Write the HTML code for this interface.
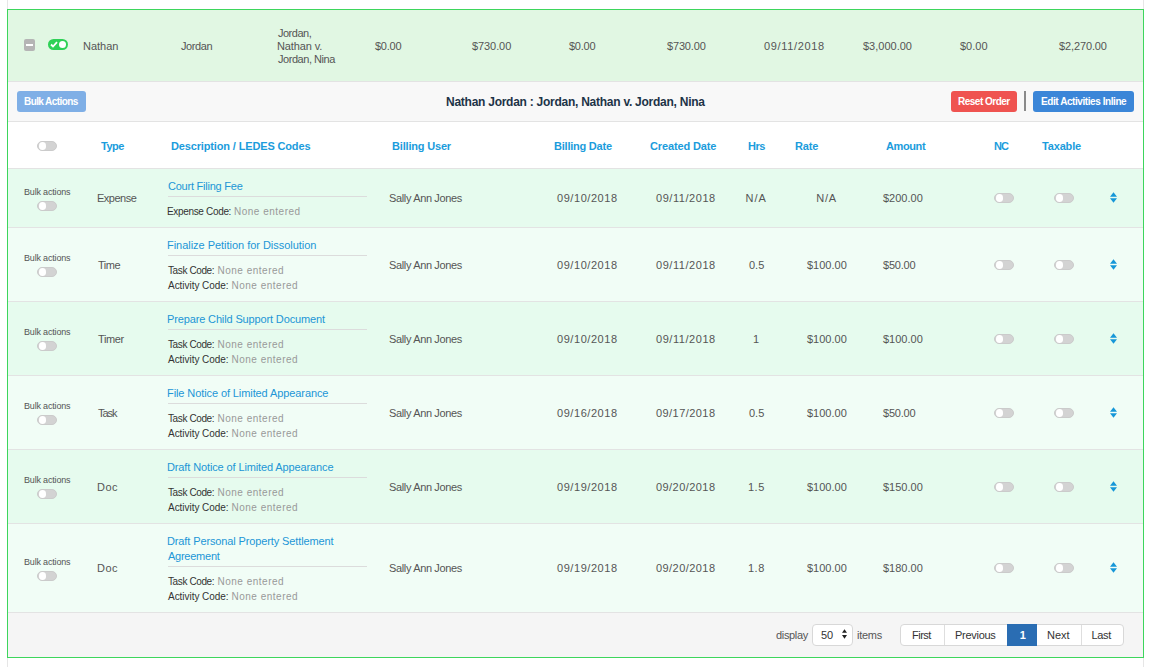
<!DOCTYPE html>
<html><head><meta charset="utf-8"><style>
html,body{margin:0;padding:0;background:#fff;width:1151px;height:667px;overflow:hidden;position:relative;font-family:"Liberation Sans",sans-serif;}
.t{position:absolute;white-space:nowrap;}
.row{position:absolute;left:8px;width:1135px;}
.hline{position:absolute;left:8px;width:1135px;height:1px;background:#e3e3e3;}
.dline{position:absolute;left:168px;width:199px;height:1px;background:#dcdcdc;}
.tog{position:absolute;width:18px;height:8px;border:1px solid #cbcbcb;border-radius:5px;background:#d3d3d3;}
.tog:after{content:"";position:absolute;left:0.5px;top:0;width:7.5px;height:8px;border-radius:50%;background:#fff;}
.sort{position:absolute;}
.vg{position:absolute;width:1px;background:#e6e6e6;}
</style></head><body>
<div class="vg" style="left:7px;top:0;height:9px"></div>
<div class="vg" style="left:1143px;top:0;height:9px"></div>
<div class="vg" style="left:7px;top:658px;height:9px"></div>
<div class="vg" style="left:1143px;top:658px;height:9px"></div>
<div style="position:absolute;left:7px;top:9px;width:1135px;height:647px;border:1px solid #3dd65c;background:#fff"></div>
<div class="row" style="top:10px;height:71px;background:#e1f7e3"></div>
<div class="hline" style="top:81px"></div>
<div class="row" style="top:82px;height:39px;background:#f8f8f8"></div>
<div class="hline" style="top:121px"></div>
<div class="row" style="top:122px;height:46px;background:#ffffff"></div>
<div class="hline" style="top:168px"></div>
<div class="row" style="top:613px;height:44px;background:#f5f5f5"></div>
<!-- header icons -->
<div style="position:absolute;left:24px;top:39px;width:11px;height:12px;border-radius:2px;background:#b5b5b5"></div>
<div style="position:absolute;left:26px;top:44px;width:7px;height:2px;background:#fff"></div>
<div style="position:absolute;left:48px;top:39px;width:20px;height:11px;border-radius:6px;background:#2fd157"></div>
<div style="position:absolute;left:59px;top:41px;width:7px;height:7px;border-radius:50%;background:#fff"></div>
<svg style="position:absolute;left:50px;top:41px" width="8" height="7" viewBox="0 0 8 7"><path d="M1 3.5L3 5.5L7 1.2" stroke="#fff" stroke-width="1.8" fill="none"/></svg>
<!-- buttons -->
<div style="position:absolute;left:17px;top:91px;width:69px;height:21px;border-radius:3px;background:#7fafe6"></div>
<div style="position:absolute;left:951px;top:91px;width:66px;height:21px;border-radius:3px;background:#ef5350"></div>
<div style="position:absolute;left:1024px;top:91px;width:2px;height:20px;background:#8a8a8a"></div>
<div style="position:absolute;left:1033px;top:91px;width:101px;height:21px;border-radius:3px;background:#3b86d8"></div>
<!-- header toggle -->
<div class="tog" style="left:37px;top:141px"></div>
<!-- footer controls -->
<div style="position:absolute;left:812px;top:624px;width:39px;height:20px;border:1px solid #d8d8d8;border-radius:4px;background:#fff"></div>
<svg style="position:absolute;left:842px;top:629px" width="5" height="10" viewBox="0 0 5 10"><path d="M2.5 0.2L5 3.8H0Z M0 6H5L2.5 9.7Z" fill="#222"/></svg>
<div style="position:absolute;left:900px;top:624px;width:222px;height:20px;border:1px solid #d8d8d8;border-radius:4px;background:#fff"></div>
<div style="position:absolute;left:944px;top:625px;width:1px;height:20px;background:#dedede"></div>
<div style="position:absolute;left:1007px;top:624px;width:30px;height:22px;background:#2a6db3"></div>
<div style="position:absolute;left:1081px;top:625px;width:1px;height:20px;background:#dedede"></div>

<div class="row" style="top:169px;height:58px;background:#e6fbee"></div>
<div class="hline" style="top:227px"></div>
<div class="tog" style="left:37px;top:201px"></div>
<div class="dline" style="top:196px"></div>
<div class="tog" style="left:994px;top:193px"></div>
<div class="tog" style="left:1054px;top:193px"></div>
<svg class="sort" style="left:1110px;top:192px" width="7" height="11" viewBox="0 0 7 11"><path d="M3.5 0.2L7 4.8H0Z M0 6.2H7L3.5 10.8Z" fill="#1697d8"/></svg>
<div class="row" style="top:228px;height:73px;background:#f1fdf6"></div>
<div class="hline" style="top:301px"></div>
<div class="tog" style="left:37px;top:267px"></div>
<div class="dline" style="top:255px"></div>
<div class="tog" style="left:994px;top:260px"></div>
<div class="tog" style="left:1054px;top:260px"></div>
<svg class="sort" style="left:1110px;top:259px" width="7" height="11" viewBox="0 0 7 11"><path d="M3.5 0.2L7 4.8H0Z M0 6.2H7L3.5 10.8Z" fill="#1697d8"/></svg>
<div class="row" style="top:302px;height:73px;background:#e6fbee"></div>
<div class="hline" style="top:375px"></div>
<div class="tog" style="left:37px;top:341px"></div>
<div class="dline" style="top:329px"></div>
<div class="tog" style="left:994px;top:334px"></div>
<div class="tog" style="left:1054px;top:334px"></div>
<svg class="sort" style="left:1110px;top:333px" width="7" height="11" viewBox="0 0 7 11"><path d="M3.5 0.2L7 4.8H0Z M0 6.2H7L3.5 10.8Z" fill="#1697d8"/></svg>
<div class="row" style="top:376px;height:73px;background:#f1fdf6"></div>
<div class="hline" style="top:449px"></div>
<div class="tog" style="left:37px;top:415px"></div>
<div class="dline" style="top:403px"></div>
<div class="tog" style="left:994px;top:408px"></div>
<div class="tog" style="left:1054px;top:408px"></div>
<svg class="sort" style="left:1110px;top:407px" width="7" height="11" viewBox="0 0 7 11"><path d="M3.5 0.2L7 4.8H0Z M0 6.2H7L3.5 10.8Z" fill="#1697d8"/></svg>
<div class="row" style="top:450px;height:73px;background:#e6fbee"></div>
<div class="hline" style="top:523px"></div>
<div class="tog" style="left:37px;top:489px"></div>
<div class="dline" style="top:477px"></div>
<div class="tog" style="left:994px;top:482px"></div>
<div class="tog" style="left:1054px;top:482px"></div>
<svg class="sort" style="left:1110px;top:481px" width="7" height="11" viewBox="0 0 7 11"><path d="M3.5 0.2L7 4.8H0Z M0 6.2H7L3.5 10.8Z" fill="#1697d8"/></svg>
<div class="row" style="top:524px;height:88px;background:#f1fdf6"></div>
<div class="hline" style="top:612px"></div>
<div class="tog" style="left:37px;top:571px"></div>
<div class="dline" style="top:566px"></div>
<div class="tog" style="left:994px;top:563px"></div>
<div class="tog" style="left:1054px;top:563px"></div>
<svg class="sort" style="left:1110px;top:562px" width="7" height="11" viewBox="0 0 7 11"><path d="M3.5 0.2L7 4.8H0Z M0 6.2H7L3.5 10.8Z" fill="#1697d8"/></svg>
<div class="t" id="t0" style="top:39.19px;font-size:11px;line-height:14px;color:#555555;left:83.00px;">Nathan</div>
<div class="t" id="t1" style="top:39.19px;font-size:11px;line-height:14px;color:#555555;letter-spacing:-0.400px;left:181.00px;">Jordan</div>
<div class="t" id="t2" style="top:26.19px;font-size:11px;line-height:14px;color:#555555;letter-spacing:-0.500px;left:278.00px;">Jordan,</div>
<div class="t" id="t3" style="top:39.19px;font-size:11px;line-height:14px;color:#555555;letter-spacing:-0.125px;left:277.00px;">Nathan v.</div>
<div class="t" id="t4" style="top:52.19px;font-size:11px;line-height:14px;color:#555555;letter-spacing:-0.455px;left:278.00px;">Jordan, Nina</div>
<div class="t" id="t5" style="top:39.19px;font-size:11px;line-height:14px;color:#555555;letter-spacing:-0.250px;left:375.00px;">$0.00</div>
<div class="t" id="t6" style="top:39.19px;font-size:11px;line-height:14px;color:#555555;letter-spacing:-0.083px;left:472.00px;">$730.00</div>
<div class="t" id="t7" style="top:39.19px;font-size:11px;line-height:14px;color:#555555;letter-spacing:-0.250px;left:569.00px;">$0.00</div>
<div class="t" id="t8" style="top:39.19px;font-size:11px;line-height:14px;color:#555555;letter-spacing:-0.167px;left:667.00px;">$730.00</div>
<div class="t" id="t9" style="top:39.19px;font-size:11px;line-height:14px;color:#555555;letter-spacing:0.667px;left:764.00px;">09/11/2018</div>
<div class="t" id="t10" style="top:39.19px;font-size:11px;line-height:14px;color:#555555;left:863.00px;">$3,000.00</div>
<div class="t" id="t11" style="top:39.19px;font-size:11px;line-height:14px;color:#555555;left:960.00px;">$0.00</div>
<div class="t" id="t12" style="top:39.19px;font-size:11px;line-height:14px;color:#555555;letter-spacing:-0.125px;left:1059.00px;">$2,270.00</div>
<div class="t" id="t13" style="top:93.84px;font-size:12px;line-height:16px;color:#1d3347;font-weight:700;letter-spacing:-0.256px;left:446.00px;">Nathan Jordan : Jordan, Nathan v. Jordan, Nina</div>
<div class="t" id="t14" style="top:95.03px;font-size:10px;line-height:13px;color:#ffffff;font-weight:700;letter-spacing:-0.591px;left:24.00px;">Bulk Actions</div>
<div class="t" id="t15" style="top:95.03px;font-size:10px;line-height:13px;color:#ffffff;font-weight:700;letter-spacing:-0.500px;left:958.00px;">Reset Order</div>
<div class="t" id="t16" style="top:95.03px;font-size:10px;line-height:13px;color:#ffffff;font-weight:700;letter-spacing:-0.429px;left:1041.00px;">Edit Activities Inline</div>
<div class="t" id="t17" style="top:139.19px;font-size:11px;line-height:14px;color:#1b9cdc;font-weight:700;letter-spacing:-0.500px;left:101.00px;">Type</div>
<div class="t" id="t18" style="top:139.19px;font-size:11px;line-height:14px;color:#1b9cdc;font-weight:700;letter-spacing:-0.146px;left:171.00px;">Description / LEDES Codes</div>
<div class="t" id="t19" style="top:139.19px;font-size:11px;line-height:14px;color:#1b9cdc;font-weight:700;letter-spacing:-0.182px;left:392.00px;">Billing User</div>
<div class="t" id="t20" style="top:139.19px;font-size:11px;line-height:14px;color:#1b9cdc;font-weight:700;letter-spacing:-0.227px;left:554.00px;">Billing Date</div>
<div class="t" id="t21" style="top:139.19px;font-size:11px;line-height:14px;color:#1b9cdc;font-weight:700;letter-spacing:-0.136px;left:650.00px;">Created Date</div>
<div class="t" id="t22" style="top:139.19px;font-size:11px;line-height:14px;color:#1b9cdc;font-weight:700;letter-spacing:-0.500px;left:748.00px;">Hrs</div>
<div class="t" id="t23" style="top:139.19px;font-size:11px;line-height:14px;color:#1b9cdc;font-weight:700;letter-spacing:-0.167px;left:795.00px;">Rate</div>
<div class="t" id="t24" style="top:139.19px;font-size:11px;line-height:14px;color:#1b9cdc;font-weight:700;letter-spacing:-0.400px;left:886.00px;">Amount</div>
<div class="t" id="t25" style="top:139.19px;font-size:11px;line-height:14px;color:#1b9cdc;font-weight:700;letter-spacing:-1.000px;left:994.00px;">NC</div>
<div class="t" id="t26" style="top:139.19px;font-size:11px;line-height:14px;color:#1b9cdc;font-weight:700;letter-spacing:-0.167px;left:1042.00px;">Taxable</div>
<div class="t" id="t27" style="top:185.88px;font-size:9px;line-height:12px;color:#555555;letter-spacing:-0.182px;left:24.00px;">Bulk actions</div>
<div class="t" id="t28" style="top:191.19px;font-size:11px;line-height:14px;color:#555555;letter-spacing:-0.500px;left:97.00px;">Expense</div>
<div class="t" id="t29" style="top:179.19px;font-size:11px;line-height:14px;color:#2196d6;letter-spacing:-0.233px;left:168.00px;">Court Filing Fee</div>
<div class="t" id="t30" style="top:205.03px;font-size:10px;line-height:13px;color:#333333;letter-spacing:-0.333px;left:167.00px;">Expense Code:</div>
<div class="t" id="t31" style="top:205.03px;font-size:10px;line-height:13px;color:#999999;letter-spacing:0.500px;left:234.00px;">None entered</div>
<div class="t" id="t32" style="top:191.19px;font-size:11px;line-height:14px;color:#555555;letter-spacing:-0.357px;left:389.00px;">Sally Ann Jones</div>
<div class="t" id="t33" style="top:191.19px;font-size:11px;line-height:14px;color:#555555;letter-spacing:0.556px;left:557.00px;">09/10/2018</div>
<div class="t" id="t34" style="top:191.19px;font-size:11px;line-height:14px;color:#555555;letter-spacing:0.556px;left:656.00px;">09/11/2018</div>
<div class="t" id="t35" style="top:191.19px;font-size:11px;line-height:14px;color:#555555;letter-spacing:1.000px;left:745.50px;">N/A</div>
<div class="t" id="t36" style="top:191.19px;font-size:11px;line-height:14px;color:#555555;letter-spacing:0.750px;left:816.25px;">N/A</div>
<div class="t" id="t37" style="top:191.19px;font-size:11px;line-height:14px;color:#555555;left:883.00px;">$200.00</div>
<div class="t" id="t38" style="top:251.88px;font-size:9px;line-height:12px;color:#555555;letter-spacing:-0.182px;left:24.00px;">Bulk actions</div>
<div class="t" id="t39" style="top:258.19px;font-size:11px;line-height:14px;color:#555555;letter-spacing:-0.500px;left:98.00px;">Time</div>
<div class="t" id="t40" style="top:238.19px;font-size:11px;line-height:14px;color:#2196d6;letter-spacing:-0.031px;left:167.00px;">Finalize Petition for Dissolution</div>
<div class="t" id="t41" style="top:264.04px;font-size:10px;line-height:13px;color:#333333;letter-spacing:-0.389px;left:168.00px;">Task Code:</div>
<div class="t" id="t42" style="top:264.04px;font-size:10px;line-height:13px;color:#999999;letter-spacing:0.500px;left:217.50px;">None entered</div>
<div class="t" id="t43" style="top:279.04px;font-size:10px;line-height:13px;color:#333333;letter-spacing:-0.038px;left:168.00px;">Activity Code:</div>
<div class="t" id="t44" style="top:279.04px;font-size:10px;line-height:13px;color:#999999;letter-spacing:0.500px;left:231.50px;">None entered</div>
<div class="t" id="t45" style="top:258.19px;font-size:11px;line-height:14px;color:#555555;letter-spacing:-0.357px;left:389.00px;">Sally Ann Jones</div>
<div class="t" id="t46" style="top:258.19px;font-size:11px;line-height:14px;color:#555555;letter-spacing:0.556px;left:557.00px;">09/10/2018</div>
<div class="t" id="t47" style="top:258.19px;font-size:11px;line-height:14px;color:#555555;letter-spacing:0.556px;left:656.00px;">09/11/2018</div>
<div class="t" id="t48" style="top:258.19px;font-size:11px;line-height:14px;color:#555555;left:749.00px;">0.5</div>
<div class="t" id="t49" style="top:258.19px;font-size:11px;line-height:14px;color:#555555;left:807.00px;">$100.00</div>
<div class="t" id="t50" style="top:258.19px;font-size:11px;line-height:14px;color:#555555;letter-spacing:-0.200px;left:883.00px;">$50.00</div>
<div class="t" id="t51" style="top:325.88px;font-size:9px;line-height:12px;color:#555555;letter-spacing:-0.182px;left:24.00px;">Bulk actions</div>
<div class="t" id="t52" style="top:332.19px;font-size:11px;line-height:14px;color:#555555;letter-spacing:-0.375px;left:98.00px;">Timer</div>
<div class="t" id="t53" style="top:312.19px;font-size:11px;line-height:14px;color:#2196d6;letter-spacing:-0.138px;left:167.00px;">Prepare Child Support Document</div>
<div class="t" id="t54" style="top:338.04px;font-size:10px;line-height:13px;color:#333333;letter-spacing:-0.389px;left:168.00px;">Task Code:</div>
<div class="t" id="t55" style="top:338.04px;font-size:10px;line-height:13px;color:#999999;letter-spacing:0.500px;left:217.50px;">None entered</div>
<div class="t" id="t56" style="top:353.04px;font-size:10px;line-height:13px;color:#333333;letter-spacing:-0.038px;left:168.00px;">Activity Code:</div>
<div class="t" id="t57" style="top:353.04px;font-size:10px;line-height:13px;color:#999999;letter-spacing:0.500px;left:231.50px;">None entered</div>
<div class="t" id="t58" style="top:332.19px;font-size:11px;line-height:14px;color:#555555;letter-spacing:-0.357px;left:389.00px;">Sally Ann Jones</div>
<div class="t" id="t59" style="top:332.19px;font-size:11px;line-height:14px;color:#555555;letter-spacing:0.556px;left:557.00px;">09/10/2018</div>
<div class="t" id="t60" style="top:332.19px;font-size:11px;line-height:14px;color:#555555;letter-spacing:0.556px;left:656.00px;">09/11/2018</div>
<div class="t" id="t61" style="top:332.19px;font-size:11px;line-height:14px;color:#555555;left:753.00px;">1</div>
<div class="t" id="t62" style="top:332.19px;font-size:11px;line-height:14px;color:#555555;left:807.00px;">$100.00</div>
<div class="t" id="t63" style="top:332.19px;font-size:11px;line-height:14px;color:#555555;left:883.00px;">$100.00</div>
<div class="t" id="t64" style="top:399.88px;font-size:9px;line-height:12px;color:#555555;letter-spacing:-0.182px;left:24.00px;">Bulk actions</div>
<div class="t" id="t65" style="top:406.19px;font-size:11px;line-height:14px;color:#555555;letter-spacing:-1.000px;left:98.00px;">Task</div>
<div class="t" id="t66" style="top:386.19px;font-size:11px;line-height:14px;color:#2196d6;letter-spacing:-0.094px;left:167.00px;">File Notice of Limited Appearance</div>
<div class="t" id="t67" style="top:412.04px;font-size:10px;line-height:13px;color:#333333;letter-spacing:-0.389px;left:168.00px;">Task Code:</div>
<div class="t" id="t68" style="top:412.04px;font-size:10px;line-height:13px;color:#999999;letter-spacing:0.500px;left:217.50px;">None entered</div>
<div class="t" id="t69" style="top:427.04px;font-size:10px;line-height:13px;color:#333333;letter-spacing:-0.038px;left:168.00px;">Activity Code:</div>
<div class="t" id="t70" style="top:427.04px;font-size:10px;line-height:13px;color:#999999;letter-spacing:0.500px;left:231.50px;">None entered</div>
<div class="t" id="t71" style="top:406.19px;font-size:11px;line-height:14px;color:#555555;letter-spacing:-0.357px;left:389.00px;">Sally Ann Jones</div>
<div class="t" id="t72" style="top:406.19px;font-size:11px;line-height:14px;color:#555555;letter-spacing:0.556px;left:557.00px;">09/16/2018</div>
<div class="t" id="t73" style="top:406.19px;font-size:11px;line-height:14px;color:#555555;letter-spacing:0.444px;left:656.00px;">09/17/2018</div>
<div class="t" id="t74" style="top:406.19px;font-size:11px;line-height:14px;color:#555555;left:749.00px;">0.5</div>
<div class="t" id="t75" style="top:406.19px;font-size:11px;line-height:14px;color:#555555;left:807.00px;">$100.00</div>
<div class="t" id="t76" style="top:406.19px;font-size:11px;line-height:14px;color:#555555;letter-spacing:-0.200px;left:883.00px;">$50.00</div>
<div class="t" id="t77" style="top:473.88px;font-size:9px;line-height:12px;color:#555555;letter-spacing:-0.182px;left:24.00px;">Bulk actions</div>
<div class="t" id="t78" style="top:480.19px;font-size:11px;line-height:14px;color:#555555;letter-spacing:0.500px;left:97.00px;">Doc</div>
<div class="t" id="t79" style="top:460.19px;font-size:11px;line-height:14px;color:#2196d6;letter-spacing:-0.121px;left:167.00px;">Draft Notice of Limited Appearance</div>
<div class="t" id="t80" style="top:486.04px;font-size:10px;line-height:13px;color:#333333;letter-spacing:-0.389px;left:168.00px;">Task Code:</div>
<div class="t" id="t81" style="top:486.04px;font-size:10px;line-height:13px;color:#999999;letter-spacing:0.500px;left:217.50px;">None entered</div>
<div class="t" id="t82" style="top:501.04px;font-size:10px;line-height:13px;color:#333333;letter-spacing:-0.038px;left:168.00px;">Activity Code:</div>
<div class="t" id="t83" style="top:501.04px;font-size:10px;line-height:13px;color:#999999;letter-spacing:0.500px;left:231.50px;">None entered</div>
<div class="t" id="t84" style="top:480.19px;font-size:11px;line-height:14px;color:#555555;letter-spacing:-0.357px;left:389.00px;">Sally Ann Jones</div>
<div class="t" id="t85" style="top:480.19px;font-size:11px;line-height:14px;color:#555555;letter-spacing:0.556px;left:557.00px;">09/19/2018</div>
<div class="t" id="t86" style="top:480.19px;font-size:11px;line-height:14px;color:#555555;letter-spacing:0.444px;left:656.00px;">09/20/2018</div>
<div class="t" id="t87" style="top:480.19px;font-size:11px;line-height:14px;color:#555555;letter-spacing:0.500px;left:748.00px;">1.5</div>
<div class="t" id="t88" style="top:480.19px;font-size:11px;line-height:14px;color:#555555;left:807.00px;">$100.00</div>
<div class="t" id="t89" style="top:480.19px;font-size:11px;line-height:14px;color:#555555;left:883.00px;">$150.00</div>
<div class="t" id="t90" style="top:555.88px;font-size:9px;line-height:12px;color:#555555;letter-spacing:-0.182px;left:24.00px;">Bulk actions</div>
<div class="t" id="t91" style="top:561.19px;font-size:11px;line-height:14px;color:#555555;letter-spacing:0.500px;left:97.00px;">Doc</div>
<div class="t" id="t92" style="top:534.19px;font-size:11px;line-height:14px;color:#2196d6;letter-spacing:-0.121px;left:167.00px;">Draft Personal Property Settlement</div>
<div class="t" id="t93" style="top:549.19px;font-size:11px;line-height:14px;color:#2196d6;letter-spacing:-0.250px;left:168.00px;">Agreement</div>
<div class="t" id="t94" style="top:575.03px;font-size:10px;line-height:13px;color:#333333;letter-spacing:-0.389px;left:168.00px;">Task Code:</div>
<div class="t" id="t95" style="top:575.03px;font-size:10px;line-height:13px;color:#999999;letter-spacing:0.500px;left:217.50px;">None entered</div>
<div class="t" id="t96" style="top:590.03px;font-size:10px;line-height:13px;color:#333333;letter-spacing:-0.038px;left:168.00px;">Activity Code:</div>
<div class="t" id="t97" style="top:590.03px;font-size:10px;line-height:13px;color:#999999;letter-spacing:0.500px;left:231.50px;">None entered</div>
<div class="t" id="t98" style="top:561.19px;font-size:11px;line-height:14px;color:#555555;letter-spacing:-0.357px;left:389.00px;">Sally Ann Jones</div>
<div class="t" id="t99" style="top:561.19px;font-size:11px;line-height:14px;color:#555555;letter-spacing:0.556px;left:557.00px;">09/19/2018</div>
<div class="t" id="t100" style="top:561.19px;font-size:11px;line-height:14px;color:#555555;letter-spacing:0.444px;left:656.00px;">09/20/2018</div>
<div class="t" id="t101" style="top:561.19px;font-size:11px;line-height:14px;color:#555555;letter-spacing:0.500px;left:748.00px;">1.8</div>
<div class="t" id="t102" style="top:561.19px;font-size:11px;line-height:14px;color:#555555;left:807.00px;">$100.00</div>
<div class="t" id="t103" style="top:561.19px;font-size:11px;line-height:14px;color:#555555;left:883.00px;">$180.00</div>
<div class="t" id="t104" style="top:628.19px;font-size:11px;line-height:14px;color:#555555;letter-spacing:-0.333px;left:776.00px;">display</div>
<div class="t" id="t105" style="top:628.19px;font-size:11px;line-height:14px;color:#333333;left:821.00px;">50</div>
<div class="t" id="t106" style="top:628.19px;font-size:11px;line-height:14px;color:#555555;letter-spacing:-0.250px;left:857.00px;">items</div>
<div class="t" id="t107" style="top:628.19px;font-size:11px;line-height:14px;color:#333333;letter-spacing:-0.500px;left:912.00px;">First</div>
<div class="t" id="t108" style="top:628.19px;font-size:11px;line-height:14px;color:#333333;letter-spacing:-0.286px;left:955.00px;">Previous</div>
<div class="t" id="t109" style="top:628.19px;font-size:11px;line-height:14px;color:#ffffff;font-weight:700;left:1019.75px;">1</div>
<div class="t" id="t110" style="top:628.19px;font-size:11px;line-height:14px;color:#333333;left:1047.00px;">Next</div>
<div class="t" id="t111" style="top:628.19px;font-size:11px;line-height:14px;color:#333333;letter-spacing:-0.333px;left:1091.50px;">Last</div>
</body></html>
